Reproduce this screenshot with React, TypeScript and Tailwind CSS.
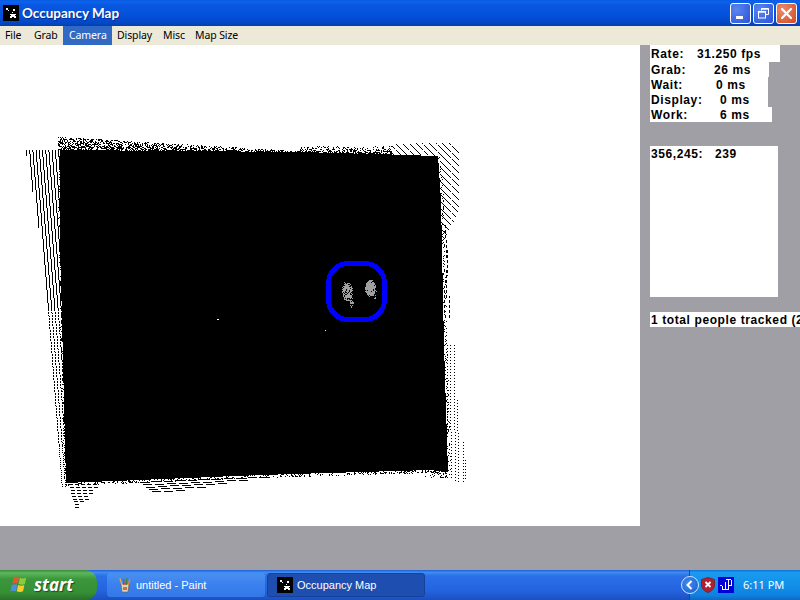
import React from "react";

function rng(seed: number) {
  let s = seed;
  return () => {
    s = (s * 1664525 + 1013904223) >>> 0;
    return s / 4294967296;
  };
}

function lerpTable(t: [number, number][], y: number) {
  for (let i = 0; i < t.length - 1; i++) {
    if (y <= t[i + 1][0]) {
      const [a, av] = t[i];
      const [b, bv] = t[i + 1];
      return av + ((y - a) / (b - a)) * (bv - av);
    }
  }
  return t[t.length - 1][1];
}

function buildMap() {
  const r = rng(7);
  let d = "";
  const px = (x: number, y: number, w = 1, h = 1) => {
    d += `M${Math.round(x)} ${Math.round(y)}h${w}v${h}h${-w}z`;
  };
  // top dithered band
  for (let x = 58; x < 300; x++) {
    const top = 137 + (x - 58) * 0.058;
    const bottom = 150 + (x - 58) * 0.008;
    for (let y = top; y < bottom; y++) {
      const t = (y - top) / (bottom - top);
      const dens = x < 110 ? 0.5 : 0.28 + t * 0.45;
      if (r() < dens) px(x, y);
    }
  }
  for (let x = 300; x < 392; x++) {
    for (let y = 146; y < 155; y++) if (r() < 0.12 + (y - 146) * 0.07) px(x, y);
  }
  // left slanted hatch
  const leftBound: [number, number][] = [[150, 26], [240, 41], [310, 48], [375, 53], [445, 57], [487, 60]];
  const leftEdge: [number, number][] = [[150, 60], [240, 60], [480, 66]];
  for (let x0 = 26; x0 < 62; x0 += 3.2) {
    for (let y = 150; y < 487; y++) {
      const x = x0 + (y - 150) * 0.078;
      if (x < lerpTable(leftBound, y) - 0.5) continue;
      if (x >= lerpTable(leftEdge, y)) break;
      let on = true;
      if (y > 445) on = y % 2 === 0;
      else if (y > 310) on = y % 3 !== 2;
      if (on) px(x, y);
    }
  }
  // left edge fuzz
  for (let y = 152; y < 480; y++) {
    if (r() < 0.45) px(lerpTable(leftEdge, y) - r() * 2, y);
  }
  // top-right diagonal hatch
  for (let c = -306; c < -205; c += 6.7) {
    for (let x = 385; x < 459; x++) {
      const y = x + c;
      if (y < 142 + (458 - x) * 0.02) continue;
      if (x < 393 - (y - 144)) continue;
      if (x < 440 && y > 154 + (x - 385) * 0.03) continue;
      if (y > 212 + (458 - x) * 2) continue;
      if (Math.round(x) % 14 !== 3) px(x, y);
    }
  }
  // right fuzzy edge
  const rightEdge: [number, number][] = [[157, 438], [200, 441], [345, 444], [440, 447], [470, 448]];
  for (let y = 157; y < 470; y++) {
    if (r() < 0.55) px(lerpTable(rightEdge, y) + r() * 2.5, y);
  }
  // right dashed lines, upper part
  const dashes: [number, number, number, number][] = [
    [445, 225, 260, 0.04], [447, 250, 300, -0.02], [449, 296, 318, -0.02], [444, 290, 320, 0.02], [447, 262, 285, -0.1],
  ];
  dashes.forEach(([x, a, b, s]) => {
    for (let y = a; y < b; y++) if (y % 5 < 3) px(x + (y - a) * s, y);
  });
  // right dotted columns, lower part
  const cols: [number, number, number][] = [
    [447, 345, 430], [450, 345, 480], [454, 345, 482], [457, 400, 482], [462, 442, 484], [464, 460, 481],
  ];
  cols.forEach(([x, a, b]) => {
    for (let y = a; y < b; y += 3) px(x + (y > 430 ? 1 : 0), y);
  });
  // bottom fuzzy edge
  const bottomEdge: [number, number][] = [[66, 483], [260, 475], [430, 470], [447, 474]];
  for (let x = 66; x < 447; x++) {
    const base = lerpTable(bottomEdge, x);
    for (let k = -2; k < 3; k++) if (r() < 0.3) px(x, base + k);
  }
  // bottom-left triangle of dashes
  for (let row = 0; row < 9; row++) {
    const y = 484 + row * 2.9;
    const a = 69 + row * 0.8;
    const b = 98 - row * 2.5;
    for (let x = a; x < b; x += 6) px(x, y, 4, 1);
  }
  // bottom dashes
  for (let row = 0; row < 5; row++) {
    for (let x = 140 + row * 3; x < 272 - row * 22; x += 12) {
      const y = 482 - (x - 140) * 0.045 + row * 2.4;
      px(x, y, 9, 1);
    }
  }
  // bottom-right dots
  for (let x = 425; x < 450; x++) {
    for (let y = 470; y < 478; y++) if (r() < 0.2) px(x, y);
  }
  return d;
}

function buildBlobs() {
  const r = rng(31);
  let d = "";
  const ellipse = (cx: number, cy: number, rx: number, ry: number, n: number) => {
    for (let i = 0; i < n; i++) {
      const a = r() * Math.PI * 2;
      const q = Math.sqrt(r());
      const x = Math.round(cx + Math.cos(a) * q * rx);
      const y = Math.round(cy + Math.sin(a) * q * ry);
      d += `M${x} ${y}h1v1h-1z`;
    }
  };
  ellipse(347, 291, 5, 9, 190);
  ellipse(344, 286, 2, 4, 12);
  ellipse(370, 288, 5, 8, 280);
  ellipse(351, 301, 2, 6, 24);
  ellipse(375, 294, 2, 5, 8);
  return d;
}

const mapPath = buildMap();
const blobs = buildBlobs();

function AppIcon({ className }: { className: string }) {
  return (
    <svg viewBox="0 0 16 16" className={className} shapeRendering="crispEdges">
      <rect width="16" height="16" fill="#000" />
      <path d="M3 3h2v2h-2zM5 5h1v1h-1zM10 4h2v2h-2z" fill="#fff" />
      <path d="M8 7h2v2h3v1h-1v1h1v2h-2v-1h-2v1h-2v-2h1v-1h-1v-1h3z" fill="#fff" />
    </svg>
  );
}

function Flag() {
  return (
    <svg viewBox="0 0 20 20" className="w-[18px] h-[18px] mr-[6px] shrink-0">
      <path d="M4 2c2-1.500 4-1.500 6-0.500l-1.500 7c-2-1-4-1-6 0z" fill="#e8562b" />
      <path d="M11 2c2 1 4 1 7 0l-1.500 7c-2 1-5 1-7 0z" fill="#8ccb3c" />
      <path d="M2 10c2-1 4-1 6 0l-1.500 7c-2-1-4-1-6 0z" fill="#4a90e0" />
      <path d="M9 10c2 1 5 1 7 0l-1.500 7c-2 1-5 1-7 0z" fill="#f8cc2c" />
    </svg>
  );
}

function PaintIcon() {
  return (
    <svg viewBox="0 0 16 16" className="w-[16px] h-[16px] mr-[3px] shrink-0">
      <path d="M4 7h8l-1 8h-6z" fill="#d9d3c0" stroke="#7a5a2a" strokeWidth="0.600" />
      <path d="M5 8L3 1.500" stroke="#d8b23a" strokeWidth="1.400" />
      <path d="M7 8L6.500 2" stroke="#d93a2a" strokeWidth="1.400" />
      <path d="M9 8L10 1" stroke="#3a8a3a" strokeWidth="1.400" />
      <path d="M11 8L13 2.500" stroke="#e08a2a" strokeWidth="1.400" />
      <path d="M6 10h4v3h-4z" fill="#d96a3a" />
    </svg>
  );
}

function StatRow({ label, value, at, w, h }: { label: string; value: string; at: string; w: string; h: string }) {
  return (
    <div className={`${w} ${h} bg-white flex items-center pl-[1px] whitespace-pre`}>
      <span className={at}>{label}</span>
      <span>{value}</span>
    </div>
  );
}

export default function App() {
  return (
    <div className="w-[800px] h-[600px] overflow-hidden flex flex-col bg-[#a09fa5] font-['Liberation_Sans',sans-serif]">
      {/* Title bar */}
      <div className="h-[26px] shrink-0 flex items-center pl-[3px] pr-[3px] bg-[linear-gradient(180deg,#0a5be0_0%,#0a63ee_8%,#0a58e0_18%,#0350da_60%,#0349c8_85%,#0340b0_100%)]">
        <AppIcon className="w-[16px] h-[16px] mr-[3px]" />
        <span className="text-white font-bold text-[13.5px] font-['Lato',sans-serif] [text-shadow:1px_1px_0_#0a2a90]">Occupancy Map</span>
        <div className="ml-auto flex gap-[2px]">
          <div className="w-[21px] h-[21px] rounded-[3px] border border-white bg-[radial-gradient(circle_at_30%_30%,#5c86ee,#2a52d8)] flex items-end pl-[5px] pb-[4px]">
            <div className="w-[7px] h-[3px] bg-white" />
          </div>
          <div className="w-[21px] h-[21px] rounded-[3px] border border-white bg-[radial-gradient(circle_at_30%_30%,#5c86ee,#2a52d8)] flex items-center justify-center">
            <svg viewBox="0 0 13 13" className="w-[13px] h-[13px]" fill="none" stroke="#fff">
              <path d="M4.500 3.500V1.500H11.500V7.500H9" strokeWidth="1" />
              <path d="M4.500 2h7" strokeWidth="1.400" />
              <rect x="1.500" y="4.500" width="7" height="6.500" strokeWidth="1" />
              <path d="M1.500 5h7" strokeWidth="1.400" />
            </svg>
          </div>
          <div className="w-[21px] h-[21px] rounded-[3px] border border-white bg-[radial-gradient(circle_at_30%_30%,#ee8a6c,#d04a20)] flex items-center justify-center">
            <svg viewBox="0 0 13 13" className="w-[13px] h-[13px]" stroke="#fff" strokeWidth="2.200" strokeLinecap="round">
              <path d="M2 2l9 9M11 2l-9 9" />
            </svg>
          </div>
        </div>
      </div>

      {/* Menu */}
      <div className="h-[19px] shrink-0 bg-[#ece9d8] flex text-[10.5px] tracking-[-0.1px] text-black font-['Noto_Sans',sans-serif]">
        {[
          ["File", "w-[28px] pl-[5px]"],
          ["Grab", "w-[35px] pl-[6px]"],
          ["Camera", "w-[49px] pl-[6px] bg-[#316ac5] text-white"],
          ["Display", "w-[47px] pl-[5px]"],
          ["Misc", "w-[32px] pl-[4px]"],
          ["Map Size", "w-[60px] pl-[4px]"],
        ].map(([t, c]) => (
          <div key={t} className={`${c} leading-[18px] whitespace-nowrap`}>{t}</div>
        ))}
      </div>

      {/* Content */}
      <div className="flex-1 flex min-h-0">
        <div className="w-[640px] h-[481px] bg-white shrink-0">
          <svg viewBox="0 45 640 481" className="w-[640px] h-[481px] block" shapeRendering="crispEdges">
            <path d="M60 150L300 152L438 156L441 200L444 345L447 440L448 472L430 470L260 475L66 483L60 240z" fill="#000" />
            <path d={mapPath} fill="#000" />
            <rect x="328.500" y="263.500" width="56" height="56" rx="20" fill="none" stroke="#0000ff" strokeWidth="5" />
            <path d={blobs} fill="#a0a0a0" />
            <path d="M217 319h2v1h-2zM325 330h1v1h-1z" fill="#fff" />
          </svg>
        </div>
        <div className="ml-[10px] flex-1 min-w-0 flex flex-col items-start text-[12px] font-bold tracking-[0.6px] text-black">
          <StatRow label="Rate:" value="31.250 fps" at="w-[46px]" w="w-[130px]" h="h-[17px]" />
          <StatRow label="Grab:" value="26 ms" at="w-[63px]" w="w-[119px]" h="h-[15px]" />
          <StatRow label="Wait:" value="0 ms" at="w-[65px]" w="w-[118px]" h="h-[15px]" />
          <StatRow label="Display:" value="0 ms" at="w-[69px]" w="w-[118px]" h="h-[15px]" />
          <StatRow label="Work:" value="6 ms" at="w-[69px]" w="w-[122px]" h="h-[15px]" />
          <div className="w-[128px] h-[151px] bg-white mt-[24px] pl-[1px] pt-[1px] flex items-start whitespace-pre leading-[15px]">
            <span className="w-[64px]">356,245:</span>
            <span>239</span>
          </div>
          <div className="w-[150px] h-[15px] bg-white mt-[15px] pl-[1px] overflow-hidden whitespace-nowrap leading-[16px]">1 total people tracked (2</div>
        </div>
      </div>

      {/* Taskbar */}
      <div className="h-[30px] shrink-0 flex items-stretch bg-[linear-gradient(180deg,#1f5fd8_0%,#3f8cf3_8%,#2a6fe8_20%,#2463de_70%,#1a50c0_100%)]">
        <div className="w-[97px] shrink-0 rounded-r-[12px] flex items-center pl-[10px] bg-[linear-gradient(180deg,#3c8a3c_0%,#5cb85c_10%,#3c963c_30%,#359035_75%,#2a702a_100%)]">
          <Flag />
          <span className="text-white text-[17px] font-bold italic font-['Open_Sans',sans-serif] [text-shadow:1px_1px_1px_#1a4a1a]">start</span>
        </div>
        <div className="w-[158px] ml-[10px] my-[3px] rounded-[3px] flex items-center pl-[10px] text-white text-[11px] bg-[linear-gradient(180deg,#4a90f0,#3a80ee_50%,#3478e8)]">
          <PaintIcon />
          <span>untitled - Paint</span>
        </div>
        <div className="w-[158px] ml-[2px] my-[3px] rounded-[3px] flex items-center pl-[9px] text-white text-[11px] bg-[#1e4eb0] border border-[#17409a]">
          <AppIcon className="w-[16px] h-[16px] mr-[4px]" />
          <span>Occupancy Map</span>
        </div>
        <div className="ml-auto w-[111px] flex items-center bg-[linear-gradient(180deg,#0f6fd0_0%,#1a9af0_8%,#1290e8_50%,#0f80e0_85%,#0f68c0_100%)] border-l border-[#0a4aa0]">
          <div className="w-[18px] h-[18px] -ml-[9px] rounded-full border border-[#d0e4ff] bg-[radial-gradient(circle_at_40%_40%,#3f8cf0,#1a5ac8)] flex items-center justify-center shrink-0">
            <svg viewBox="0 0 10 10" className="w-[10px] h-[10px]" fill="none" stroke="#fff" strokeWidth="2"><path d="M6.500 1L2.500 5L6.500 9" /></svg>
          </div>
          <svg viewBox="0 0 14 16" className="w-[14px] h-[16px] ml-[2px] shrink-0">
            <path d="M7 0.500L13.500 2.500V8C13.500 12 10 14.500 7 15.500C4 14.500 0.500 12 0.500 8V2.500z" fill="#b02030" stroke="#702028" strokeWidth="0.800" />
            <path d="M4.500 5L9.500 10M9.500 5L4.500 10" stroke="#fff" strokeWidth="1.800" />
          </svg>
          <div className="w-[16px] h-[16px] ml-[3px] bg-[#0000d8] flex items-center justify-center shrink-0">
            <svg viewBox="0 0 16 16" className="w-[16px] h-[16px]" fill="none" stroke="#fff" shapeRendering="crispEdges">
              <path d="M2 8.500h2M4.500 8.500v4h6M10.500 3v9.500M8 2.500h5M13.500 3v5h-3M7.500 5v7" />
            </svg>
          </div>
          <span className="text-white text-[11px] ml-[9px] font-['Noto_Sans',sans-serif] whitespace-nowrap">6:11 PM</span>
        </div>
      </div>
    </div>
  );
}
